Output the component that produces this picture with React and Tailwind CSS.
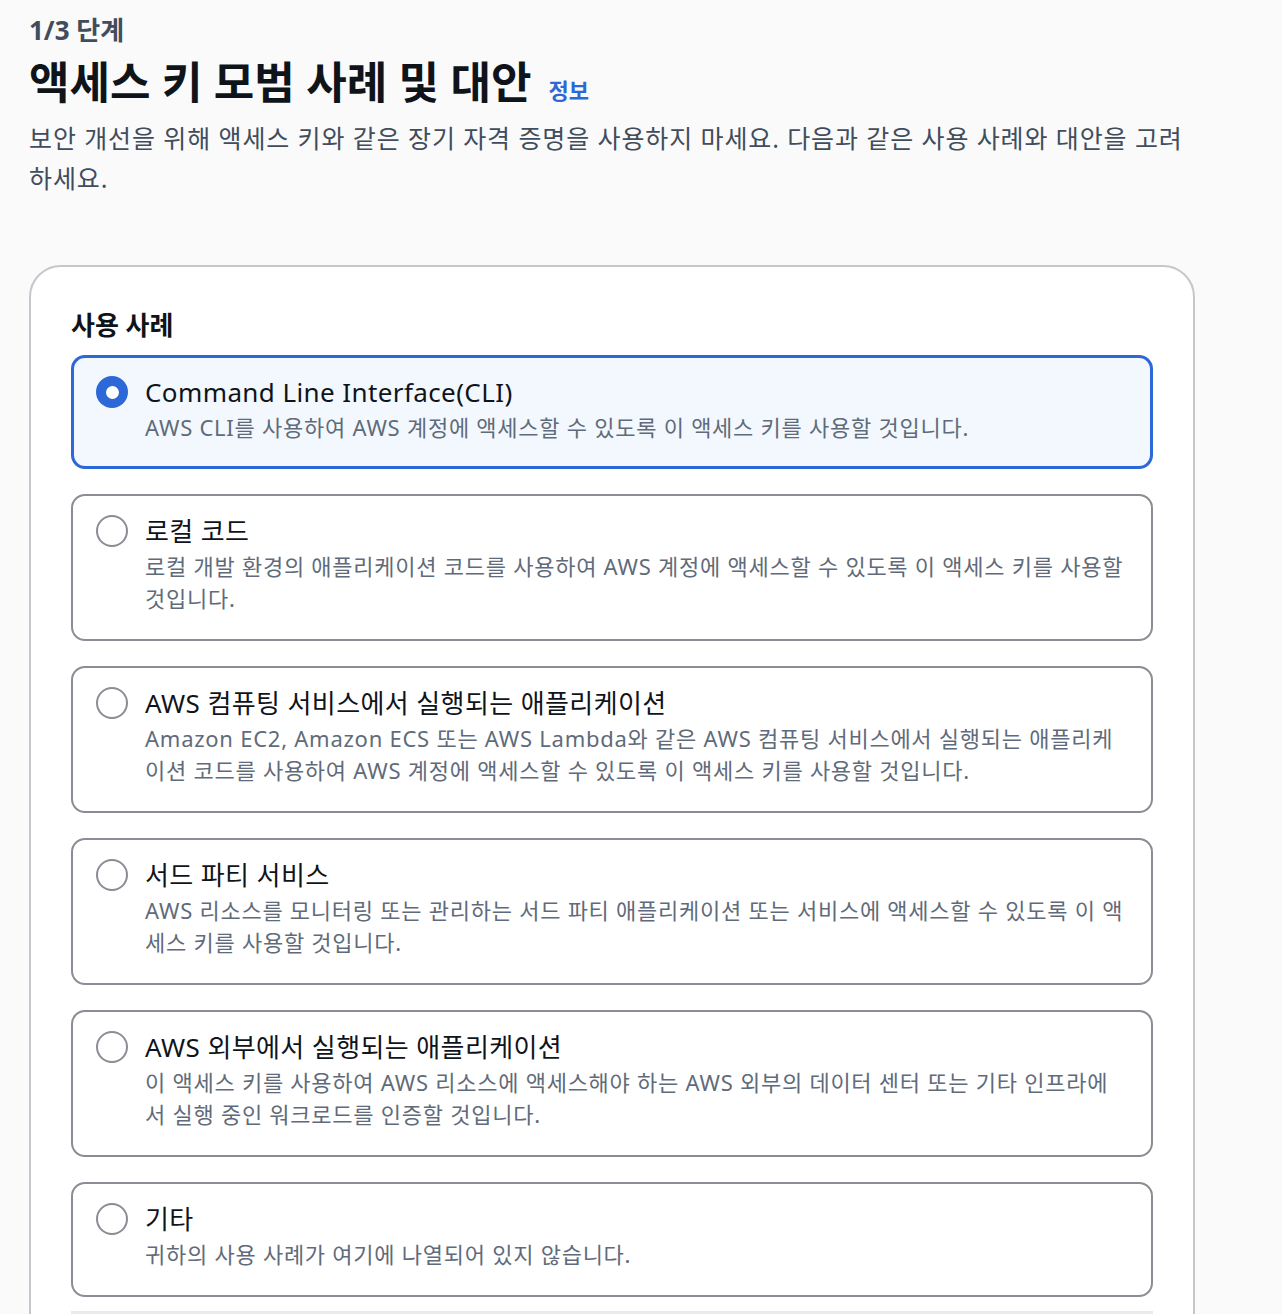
import React, { useState } from "react";

const options = [
  {
    id: "cli",
    title: "Command Line Interface(CLI)",
    desc: "AWS CLI를 사용하여 AWS 계정에 액세스할 수 있도록 이 액세스 키를 사용할 것입니다.",
  },
  {
    id: "local",
    title: "로컬 코드",
    desc: "로컬 개발 환경의 애플리케이션 코드를 사용하여 AWS 계정에 액세스할 수 있도록 이 액세스 키를 사용할 것입니다.",
  },
  {
    id: "compute",
    title: "AWS 컴퓨팅 서비스에서 실행되는 애플리케이션",
    desc: "Amazon EC2, Amazon ECS 또는 AWS Lambda와 같은 AWS 컴퓨팅 서비스에서 실행되는 애플리케이션 코드를 사용하여 AWS 계정에 액세스할 수 있도록 이 액세스 키를 사용할 것입니다.",
  },
  {
    id: "third",
    title: "서드 파티 서비스",
    desc: "AWS 리소스를 모니터링 또는 관리하는 서드 파티 애플리케이션 또는 서비스에 액세스할 수 있도록 이 액세스 키를 사용할 것입니다.",
  },
  {
    id: "outside",
    title: "AWS 외부에서 실행되는 애플리케이션",
    desc: "이 액세스 키를 사용하여 AWS 리소스에 액세스해야 하는 AWS 외부의 데이터 센터 또는 기타 인프라에서 실행 중인 워크로드를 인증할 것입니다.",
  },
  {
    id: "other",
    title: "기타",
    desc: "귀하의 사용 사례가 여기에 나열되어 있지 않습니다.",
  },
];

function Option({ opt, selected, onSelect }) {
  return (
    <label
      onClick={() => onSelect(opt.id)}
      className={
        selected
          ? "flex cursor-pointer items-start gap-[17px] rounded-[14px] border-[3px] border-[#2c68d8] bg-[#f2f8fd] pl-[22px] pr-[25px] pt-[16px] pb-[23px]"
          : "flex cursor-pointer items-start gap-[17px] rounded-[14px] border-2 border-[#8c8c94] bg-white pl-[23px] pr-[26px] pt-[17px] pb-[25px]"
      }
    >
      <span className="flex h-[36px] items-center">
        {selected ? (
          <span className="flex h-[32px] w-[32px] items-center justify-center rounded-full bg-[#2c68d8]">
            <span className="h-[13px] w-[13px] rounded-full bg-white" />
          </span>
        ) : (
          <span className="h-[32px] w-[32px] rounded-full border-2 border-[#8c8c94] bg-white" />
        )}
      </span>
      <span className="flex flex-col">
        <span className="text-[26px] leading-[36px] tracking-[0.4px] text-[#0f141a]">{opt.title}</span>
        <span className="mt-[1px] text-[22px] leading-[32px] tracking-[0.75px] text-[#5f6b7a]">{opt.desc}</span>
      </span>
    </label>
  );
}

export default function App() {
  const [selected, setSelected] = useState("cli");

  return (
    <div
      className="min-h-screen bg-[#fafafa] pl-[29px] pt-[10px]"
      style={{ fontFamily: '"Noto Sans", "Noto Sans CJK KR", sans-serif' }}
    >
      <div className="w-[1166px]">
        <p className="text-[26px] font-bold leading-[40px] text-[#414d5c]">1/3 단계</p>
        <h1 className="mt-[4px] flex items-baseline gap-[17px] text-[44px] font-bold leading-[56px] text-[#0f141a]">
          액세스 키 모범 사례 및 대안
          <a href="#" className="text-[22px] font-bold text-[#2c68d8]">정보</a>
        </h1>
        <p className="w-[1172px] text-[25px] leading-[40px] tracking-[0.9px] text-[#414d5c]">
          보안 개선을 위해 액세스 키와 같은 장기 자격 증명을 사용하지 마세요. 다음과 같은 사용 사례와 대안을 고려하세요.
        </p>

        <div className="mt-[67px] rounded-[32px] border-2 border-[#c6c6cd] bg-white px-[40px] pt-[40px]">
          <h2 className="text-[26px] font-bold leading-[36px] text-[#0f141a]">사용 사례</h2>
          <div className="mt-[12px] flex flex-col gap-[25px]">
            {options.map((o) => (
              <Option key={o.id} opt={o} selected={selected === o.id} onSelect={setSelected} />
            ))}
          </div>
          <div className="mt-[14px] h-[40px] border-t-[3px] border-[#e9ebed]" />
        </div>
      </div>
    </div>
  );
}
